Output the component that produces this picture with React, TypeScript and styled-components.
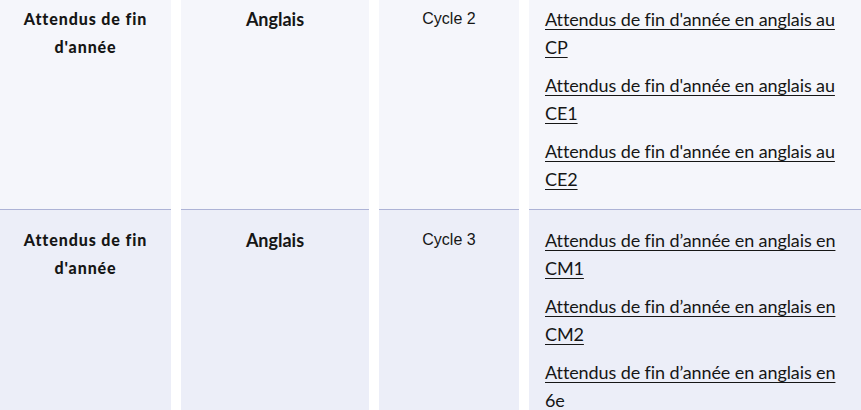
import React from 'react';
import styled, { createGlobalStyle } from 'styled-components';

const GlobalStyle = createGlobalStyle`
body {
  margin: 0;
  background: #ffffff;
  font-family: "Lato", "Liberation Sans", sans-serif;
  color: #161616;
}
`;

const Table = styled.div`
width: 861px;
margin-top: -11px;
display: flex;
flex-direction: column;
`;

const Row = styled.div<{ $bg: string; $line?: boolean }>`
display: grid;
grid-template-columns: 171px 188px 140px 332px;
column-gap: 10px;
& > div {
  background: ${(p) => p.$bg};
  border-bottom: ${(p) => (p.$line ? '1px solid #adb3d6' : 'none')};
}
`;

const Cell = styled.div<{ $align?: string }>`
padding: 16px 16px;
text-align: ${(p) => p.$align || 'left'};
font-size: 16px;
line-height: 28px;
`;

const HeadText = styled.div`
font-family: "Lato", sans-serif;
font-weight: 900;
letter-spacing: 0.9px;
`;

const SubjectText = styled.div`
font-family: "Lato", sans-serif;
font-weight: 700;
font-size: 18px;
`;

const CycleText = styled.div`
font-family: "Liberation Sans", Arial, sans-serif;
`;

const LinkList = styled.div`
display: flex;
flex-direction: column;
gap: 10px;
`;

const LinkItem = styled.div`
font-family: "Lato", sans-serif;
font-size: 18px;
line-height: 28px;
`;

const Link = styled.a`
letter-spacing: -0.1px;
color: #161616;
text-decoration: underline;
text-decoration-thickness: 1px;
text-underline-offset: 3px;
`;

type rowType = {
  cycle: string;
  links: string[];
  bg: string;
  line?: boolean;
};

const rows: rowType[] = [
  {
    cycle: 'Cycle 2',
    bg: '#f5f6fb',
    line: true,
    links: [
      "Attendus de fin d'année en anglais au CP",
      "Attendus de fin d'année en anglais au CE1",
      "Attendus de fin d'année en anglais au CE2",
    ],
  },
  {
    cycle: 'Cycle 3',
    bg: '#eceef8',
    links: [
      'Attendus de fin d’année en anglais en CM1',
      'Attendus de fin d’année en anglais en CM2',
      'Attendus de fin d’année en anglais en 6e',
    ],
  },
];

const App: React.FC = () => {
  return (
    <>
      <GlobalStyle />
      <Table>
        {rows.map((r) => (
          <Row key={r.cycle} $bg={r.bg} $line={r.line}>
            <Cell $align="center">
              <HeadText>Attendus de fin d'année</HeadText>
            </Cell>
            <Cell $align="center">
              <SubjectText>Anglais</SubjectText>
            </Cell>
            <Cell $align="center">
              <CycleText>{r.cycle}</CycleText>
            </Cell>
            <Cell>
              <LinkList>
                {r.links.map((l) => (
                  <LinkItem key={l}>
                    <Link href="#">{l}</Link>
                  </LinkItem>
                ))}
              </LinkList>
            </Cell>
          </Row>
        ))}
      </Table>
    </>
  );
};

export default App;
